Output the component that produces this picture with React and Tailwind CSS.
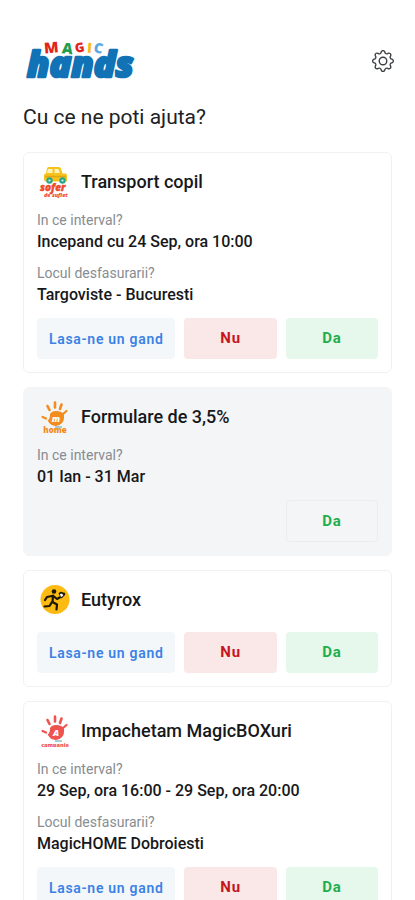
import React from 'react';
import { BsGear } from 'react-icons/bs';

const ACTIVITIES = [
    {
        id: 1,
        title: 'Transport copil',
        icon: 'car',
        fields: [
            { label: 'In ce interval?', value: 'Incepand cu 24 Sep, ora 10:00' },
            { label: 'Locul desfasurarii?', value: 'Targoviste - Bucuresti' },
        ],
    },
    {
        id: 2,
        title: 'Formulare de 3,5%',
        icon: 'home',
        answered: true,
        fields: [{ label: 'In ce interval?', value: '01 Ian - 31 Mar' }],
    },
    { id: 3, title: 'Eutyrox', icon: 'runner', fields: [] },
    {
        id: 4,
        title: 'Impachetam MagicBOXuri',
        icon: 'camp',
        fields: [
            { label: 'In ce interval?', value: '29 Sep, ora 16:00 - 29 Sep, ora 20:00' },
            { label: 'Locul desfasurarii?', value: 'MagicHOME Dobroiesti' },
        ],
    },
];

const Logo = () => (
    <svg viewBox="0 -6 120 56" className="h-14 w-[120px]" role="img" aria-label="Magic hands">
        <g fontFamily="Open Sans, sans-serif" fontWeight="800">
            <text
                x="4"
                y="38"
                fontSize="36"
                fontStyle="italic"
                fill="#1173b6"
                stroke="#1173b6"
                strokeWidth="2.500"
                strokeLinejoin="round"
            >
                hands
            </text>
            <g fontSize="14" stroke="#fff" strokeWidth="1.500" paintOrder="stroke">
                <text x="21" y="14" fontSize="15" fill="#e2231a" transform="rotate(-5 28 10)">M</text>
                <text x="39" y="15" fontSize="15" fill="#1f9d4d" transform="rotate(6 45 10)">A</text>
                <text x="52" y="13" fontSize="13" fill="#e2231a" transform="rotate(-8 57 9)">G</text>
                <text x="64" y="14" fill="#f9b91a" transform="rotate(4 66 10)">I</text>
                <text x="71" y="14" fill="#5aa9e0" transform="rotate(12 75 9)">C</text>
            </g>
        </g>
    </svg>
);

const CarIcon = () => (
    <svg viewBox="0 0 32 32" className="size-8 shrink-0" aria-hidden="true">
        <path
            d="M8.500 1h11.500q1.500 0 2 1.500l1.500 5h3q1.500 0 1.500 2v5q0 1-1 1h-20q-2 0-2-2v-4q0-2 2-2l1-5q.3-1.500 1.500-1.500z"
            fill="#f6c31c"
        />
        <path d="M9 3h4.500v4H8zM15.500 3h4l1.300 4h-5.300z" fill="#fff3bd" />
        <path d="M6 10.500h21" stroke="#e3a512" strokeWidth="1.500" />
        <circle cx="10.500" cy="14.500" r="3.200" fill="#2aa58c" />
        <circle cx="10.500" cy="14.500" r="1.100" fill="#d6efe6" />
        <circle cx="23.500" cy="14.500" r="3.200" fill="#2aa58c" />
        <circle cx="23.500" cy="14.500" r="1.100" fill="#d6efe6" />
        <g fontFamily="Open Sans, sans-serif" fontWeight="800" fontStyle="italic" fill="#ee4a2b">
            <text x="1" y="24.500" fontSize="10" stroke="#ee4a2b" strokeWidth=".4">sofer</text>
            <text x="5" y="31" fontSize="5.500">de suflet</text>
        </g>
    </svg>
);

const HandIcon = ({ color, letter, label }) => (
    <svg viewBox="0 0 32 32" className="size-8 shrink-0" aria-hidden="true">
        <g stroke={color} strokeLinecap="round" fill="none">
            <path d="M8.500 5l2 4M16 1.500v5M22.500 3.500l-1.500 4.500" strokeWidth="2.600" />
            <path d="M27.500 10l-3.500 3M3.500 16l3.500 1.500" strokeWidth="2.200" />
        </g>
        <path
            d="M11 13q2-3.500 7-3q6 .5 7 4q.6 5-2 8q-3 3.500-7.500 2.800q-5-.8-7-5.800q2.500 0 2.500-6z"
            fill={color}
        />
        <text
            x="17"
            y="21"
            textAnchor="middle"
            fontFamily="Open Sans, sans-serif"
            fontWeight="800"
            fontStyle="italic"
            fontSize="9"
            fill="#fff"
        >
            {letter}
        </text>
        <path d="M16 26h4" stroke="#4a9bd8" strokeWidth="1" />
        <path d="M20 26h3" stroke="#58b567" strokeWidth="1" />
        <text
            x="16"
            y="31.500"
            textAnchor="middle"
            fontFamily="Open Sans, sans-serif"
            fontWeight="800"
            fontSize={label.length > 4 ? 5.5 : 8}
            fill={color}
        >
            {label}
        </text>
    </svg>
);

const RunnerIcon = () => (
    <svg viewBox="0 0 32 32" className="size-8 shrink-0" aria-hidden="true">
        <circle cx="16" cy="15.500" r="14.500" fill="#fcba12" />
        <circle cx="15" cy="7.500" r="2.300" fill="#1c1704" />
        <path
            d="M14 11.500l-.5 6.500 4.500 2.500-.5 5M13 18l-2.500 4-5 .5M13 12l-5 1-2 3M15 12.500l3 2.500 3.500-2"
            fill="none"
            stroke="#1c1704"
            strokeWidth="2.200"
            strokeLinecap="round"
            strokeLinejoin="round"
        />
        <path d="M19.500 9.500q2-3 4.500-1q3-.5 2 2.500l-3.500 3.500z" fill="#1c1704" />
        <path d="M21 10.500q1-2 2.300-.2q1.700 0 .7 1.500l-2 1.500z" fill="#fff" />
    </svg>
);

const ActivityIcon = ({ type }) => {
    if (type === 'car') return <CarIcon />;
    if (type === 'runner') return <RunnerIcon />;
    if (type === 'home') return <HandIcon color="#f28c1f" letter="m" label="home" />;
    return <HandIcon color="#ef5350" letter="A" label="campanie" />;
};

const ActivityCard = ({ activity }) => {
    const { title, icon, fields, answered } = activity;

    return (
        <article
            className={
                answered
                    ? 'rounded-md border border-[#f3f5f7] bg-[#f3f5f7] p-[13px]'
                    : 'rounded-md border border-[#f0f1f2] bg-white p-[13px]'
            }
        >
            <div className="flex items-center gap-[10px] pl-[2px]">
                <ActivityIcon type={icon} />
                <h2 className="text-lg leading-7 font-medium text-[#17181a]">{title}</h2>
            </div>

            {fields.length > 0 && (
                <dl className="mt-3 flex flex-col gap-[9px]">
                    {fields.map((field) => (
                        <div key={field.label}>
                            <dt className="text-sm leading-5 text-[#868c92]">{field.label}</dt>
                            <dd className="text-base leading-6 font-medium text-[#17181a]">{field.value}</dd>
                        </div>
                    ))}
                </dl>
            )}

            <div
                className={
                    fields.length > 0
                        ? 'mt-[11px] grid grid-cols-[3fr_2fr_2fr] gap-[9px]'
                        : 'mt-4 grid grid-cols-[3fr_2fr_2fr] gap-[9px]'
                }
            >
                {answered ? (
                    <button
                        type="button"
                        className="col-start-3 h-[42px] rounded border border-[#eaecee] text-[15px] font-bold tracking-wider text-[#1fae4b]"
                    >
                        Da
                    </button>
                ) : (
                    <>
                        <button
                            type="button"
                            className="h-[41px] rounded bg-[#f4f7f9] text-sm font-semibold tracking-wider whitespace-nowrap text-[#3b82e6]"
                        >
                            Lasa-ne un gand
                        </button>
                        <button
                            type="button"
                            className="h-[41px] rounded bg-[#f9e8e7] text-[15px] font-bold tracking-wider text-[#c5161d]"
                        >
                            Nu
                        </button>
                        <button
                            type="button"
                            className="h-[41px] rounded bg-[#e6f7eb] text-[15px] font-bold tracking-wider text-[#1fae4b]"
                        >
                            Da
                        </button>
                    </>
                )}
            </div>
        </article>
    );
};

const App = () => {
    return (
        <div className="h-screen overflow-y-auto bg-white px-[23px] pt-[33px] font-[Roboto,sans-serif] [scrollbar-width:none]">
            <header className="flex items-center justify-between">
                <Logo />
                <button type="button" aria-label="Setari" className="-mr-[2px] text-[#3c4043]">
                    <BsGear size={22} />
                </button>
            </header>

            <h1 className="mt-[14px] text-[21px] leading-7 text-[#202124]">Cu ce ne poti ajuta?</h1>

            <main className="mt-[21px] flex flex-col gap-[14px] pb-6">
                {ACTIVITIES.map((activity) => (
                    <ActivityCard key={activity.id} activity={activity} />
                ))}
            </main>
        </div>
    );
};

export default App;
